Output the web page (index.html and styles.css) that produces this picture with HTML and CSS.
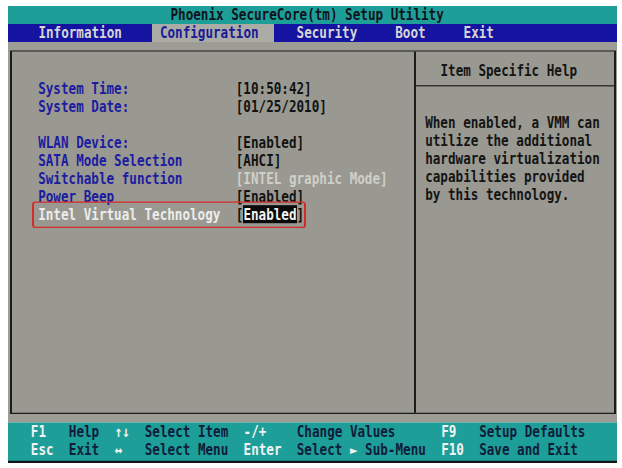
FILE: index.html
```html
<!DOCTYPE html>
<html lang="en">
<head>
<meta charset="utf-8">
<title>Phoenix SecureCore(tm) Setup Utility</title>
<link rel="stylesheet" href="styles.css">
</head>
<body>
<div class="frame">
<div class="screen">
  <div class="title">Phoenix SecureCore(tm) Setup Utility</div>
  <nav class="tabs">
    <span class="tab">Information</span>
    <span class="tab active">Configuration</span>
    <span class="tab">Security</span>
    <span class="tab">Boot</span>
    <span class="tab">Exit</span>
  </nav>
  <main class="main">
    <div class="box">
      <section class="items">
        <div class="group">
          <div class="item"><span class="label">System Time:</span><span class="value">[10:50:42]</span></div>
          <div class="item"><span class="label">System Date:</span><span class="value">[01/25/2010]</span></div>
        </div>
        <div class="group">
          <div class="item"><span class="label">WLAN Device:</span><span class="value">[Enabled]</span></div>
          <div class="item"><span class="label">SATA Mode Selection</span><span class="value">[AHCI]</span></div>
          <div class="item"><span class="label">Switchable function</span><span class="value disabled">[INTEL graphic Mode]</span></div>
          <div class="item"><span class="label">Power Beep</span><span class="value">[Enabled]</span></div>
          <div class="item selected"><span class="label">Intel Virtual Technology</span><span class="value">[<span class="cursor">Enabled</span>]</span></div>
        </div>
      </section>
      <aside class="help">
        <div class="help-title">Item Specific Help</div>
        <div class="help-body">
          <span class="line">When enabled, a VMM can</span>
          <span class="line">utilize the additional</span>
          <span class="line">hardware virtualization</span>
          <span class="line">capabilities provided</span>
          <span class="line">by this technology.</span>
        </div>
      </aside>
    </div>
  </main>
  <footer class="keys">
    <span class="key">F1</span><span class="desc">Help</span><span class="key">↑↓</span><span class="desc">Select Item</span><span class="key">-/+</span><span class="desc">Change Values</span><span class="key">F9</span><span class="desc">Setup Defaults</span>
    <span class="key">Esc</span><span class="desc">Exit</span><span class="key">↔</span><span class="desc">Select Menu</span><span class="key">Enter</span><span class="desc">Select <span class="key">►</span> Sub-Menu</span><span class="key">F10</span><span class="desc">Save and Exit</span>
  </footer>
</div>
</div>
</body>
</html>
```
FILE: styles.css
```css
html, body {
  margin: 0;
  padding: 0;
  background: #ffffff;
}

body {
  padding: 6px 0 0 8px;
}

/* reserves the on-screen size of the stretched text-mode screen */
.frame {
  width: 609px;
  height: 457px;
}

/* 80x25 text-mode screen: 7.6px columns, rows stretched 1.2x vertically */
.screen {
  width: 609px;
  transform: scaleY(1.2);
  transform-origin: 0 0;
  font-family: "DejaVu Sans Mono", monospace;
  font-weight: bold;
  font-size: 12.62px;
  line-height: 15px;
  display: flex;
  flex-direction: column;
}

.title {
  height: 15px;
  background: #1e9e98;
  color: #10141c;
  text-align: center;
  padding-right: 10.7px;
  white-space: pre;
}

.tabs {
  height: 15px;
  background: #1414a0;
  display: flex;
  gap: 15.2px;
  padding-left: 22.8px;
}

.tab {
  color: #d6d6d6;
  padding: 0 15.2px 0 7.6px;
  white-space: pre;
}

.tab.active {
  background: #acaca6;
  color: #1a1a96;
}

.main {
  height: 316.67px;
  box-sizing: border-box;
  background: #9d9d96;
  padding: 6.67px 1.5px 6.67px 2.3px;
}

.box {
  height: 100%;
  box-sizing: border-box;
  border: 1.67px solid #1c1c1c;
  border-left-width: 2px;
  border-right-width: 2px;
  background: #999991;
  display: flex;
}

.items {
  width: 401.8px;
  padding: 23px 0 0 25.9px;
  box-sizing: border-box;
  display: flex;
  flex-direction: column;
  gap: 15px;
}

.item {
  display: grid;
  grid-template-columns: 197.6px auto;
  white-space: pre;
}

.label {
  color: #1c1ca0;
}

.value {
  color: #121212;
}

.value.disabled {
  color: #cfcfc8;
}

.item.selected {
  position: relative;
  width: 266px;
}

.item.selected .label {
  color: #ececec;
}

.cursor {
  background: #0a0a0a;
  color: #f4f4f4;
}

.item.selected::after {
  content: "";
  position: absolute;
  left: -6px;
  top: -3px;
  bottom: -4.5px;
  width: 274px;
  border: 1.67px solid #d62b2b;
  border-left-width: 2px;
  border-right-width: 2px;
  border-radius: 3px;
  box-sizing: border-box;
}

.help {
  flex: 1;
  border-left: 2px solid #1c1c1c;
  display: flex;
  flex-direction: column;
}

.help-title {
  padding: 8px 0 5.33px 24.4px;
  border-bottom: 1.67px solid #1c1c1c;
  color: #141414;
  white-space: pre;
}

.help-body {
  padding: 23px 0 0 9.1px;
  color: #141414;
  display: flex;
  flex-direction: column;
}

.line {
  white-space: pre;
}

.keys {
  height: 34.17px;
  box-sizing: border-box;
  background: #1e9e98;
  border-bottom: 2.5px solid #121212;
  padding: 0.83px 0 0 22.8px;
  display: grid;
  grid-template-columns: 38px 45.6px 30.4px 98.8px 53.2px 144.4px 38px 1fr;
  grid-auto-rows: 15px;
  white-space: pre;
}

.key {
  color: #f2f2f2;
}

.desc {
  color: #0f1c3a;
}
```
